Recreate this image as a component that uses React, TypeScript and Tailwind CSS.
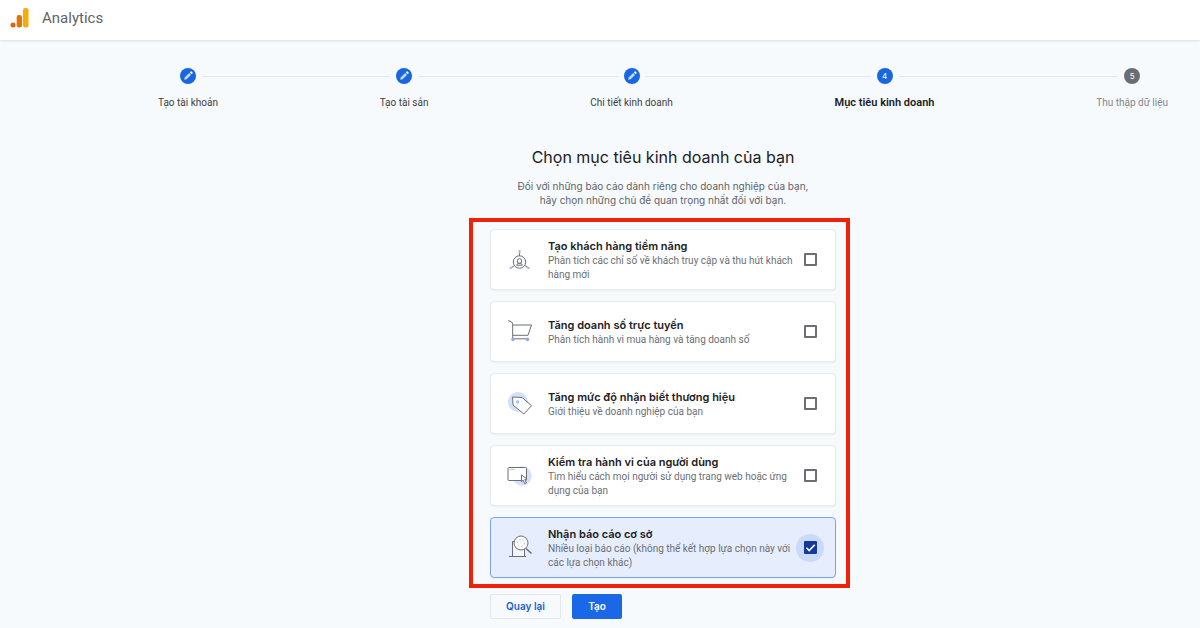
import type { ReactNode } from "react";
import { Fragment } from "react";

type Step = { label: string; state: "done" | "current" | "next" };

const steps: Step[] = [
  { label: "Tạo tài khoản", state: "done" },
  { label: "Tạo tài sản", state: "done" },
  { label: "Chi tiết kinh doanh", state: "done" },
  { label: "Mục tiêu kinh doanh", state: "current" },
  { label: "Thu thập dữ liệu", state: "next" },
];

const labelStyles = {
  done: "text-[10px] text-[#3c4043]",
  current: "text-[11px] font-semibold text-[#202124]",
  next: "text-[10px] text-[#80868b]",
};

type Goal = {
  id: string;
  title: string;
  text: string;
  icon: ReactNode;
  checked?: boolean;
};

const goals: Goal[] = [
  {
    id: "leads",
    title: "Tạo khách hàng tiềm năng",
    text: "Phân tích các chỉ số về khách truy cập và thu hút khách hàng mới",
    icon: (
      <>
        <path d="M19.5 12v4M14.5 25.5l-3 2M24.8 25.5l3 2" />
        <path d="M19.5 10v3.5M9.8 28.6l2.6-1.6M29.4 28.6l-2.6-1.6" stroke="#a9b3f0" strokeWidth="2" />
        <circle cx="19.5" cy="22" r="6.2" />
        <circle cx="19.5" cy="21" r="2.3" />
        <path d="M16.6 25.2c.4-1.5 1.5-1.8 2.9-1.8s2.5.3 2.9 1.8z" />
      </>
    ),
  },
  {
    id: "sales",
    title: "Tăng doanh số trực tuyến",
    text: "Phân tích hành vi mua hàng và tăng doanh số",
    icon: (
      <>
        <path d="M8 8.8c3 .2 4.5 1.2 4.7 4v14h14.5M12.7 13h18.8L28 23.3H12.7" />
        <circle cx="13" cy="27.4" r="1.8" fill="#8eabeb" stroke="none" />
        <circle cx="27.5" cy="27.4" r="1.8" fill="#8eabeb" stroke="none" />
      </>
    ),
  },
  {
    id: "brand",
    title: "Tăng mức độ nhận biết thương hiệu",
    text: "Giới thiệu về doanh nghiệp của bạn",
    icon: (
      <>
        <circle cx="18" cy="18" r="10" fill="#d2e0fc" stroke="none" />
        <path d="M12.6 13l.4 8 10.8 9 7.7-8.3-9.5-8.2z" fill="#fff" strokeLinejoin="round" />
        <circle cx="17.5" cy="18" r="1.8" fill="#a9c2f5" stroke="none" />
      </>
    ),
  },
  {
    id: "behavior",
    title: "Kiểm tra hành vi của người dùng",
    text: "Tìm hiểu cách mọi người sử dụng trang web hoặc ứng dụng của bạn",
    icon: (
      <>
        <circle cx="22" cy="20" r="9.7" fill="#d2e0fc" stroke="none" />
        <rect x="8" y="11.5" width="18.5" height="13" rx="1" fill="#fff" />
        <path d="M9.5 13.3h5" stroke="#b8bcc2" />
        <path d="M21.5 19l5.5 4-2.2.5 1.6 3.5-1.7.7-1.5-3.5-1.7 1.5z" fill="#fff" />
      </>
    ),
  },
  {
    id: "reports",
    title: "Nhận báo cáo cơ sở",
    text: "Nhiều loại báo cáo (không thể kết hợp lựa chọn này với các lựa chọn khác)",
    checked: true,
    icon: (
      <>
        <path d="M12.5 28.5v-15h12v15" fill="#f4f7fe" />
        <path d="M9 28.5h17" />
        <circle cx="21" cy="15" r="7" fill="#fff" />
        <circle cx="21" cy="15" r="3.5" stroke="#c3c7cd" strokeDasharray="2 1.5" />
        <path d="M26 20.5l5.5 5" strokeWidth="1.6" />
      </>
    ),
  },
];

function StepBadge({ state, number }: { state: Step["state"]; number: number }) {
  return (
    <span
      className={
        state === "next"
          ? "mx-1.5 grid size-4 place-items-center rounded-full bg-[#6b6d70] text-[8px] text-white"
          : "mx-1.5 grid size-4 place-items-center rounded-full bg-[#1967e0] text-[8px] text-white"
      }
    >
      {state === "done" ? (
        <svg viewBox="0 0 16 16" className="size-4" aria-hidden>
          <path d="M4.2 11.8l.5-2.4 4.4-4.4 1.9 1.9-4.4 4.4z" fill="#c5d9fb" />
          <path d="M9.7 4.4l.9-.9a.7.7 0 0 1 1 0l.9.9a.7.7 0 0 1 0 1l-.9.9z" fill="#fff" />
        </svg>
      ) : (
        number
      )}
    </span>
  );
}

function Stepper() {
  return (
    <ol className="flex px-8 pt-7">
      {steps.map((step, i) => (
        <Fragment key={step.label}>
          {i > 0 && <li aria-hidden className="mt-2 h-px flex-1 bg-[#e3e7eb]" />}
          <li className="flex flex-col" aria-current={step.state === "current" ? "step" : undefined}>
            <div className="flex items-center">
              <span className={i === 0 ? "h-px flex-1" : "h-px flex-1 bg-[#e3e7eb]"} />
              <StepBadge state={step.state} number={i + 1} />
              <span className={i === steps.length - 1 ? "h-px flex-1" : "h-px flex-1 bg-[#e3e7eb]"} />
            </div>
            <span className={`mt-[11px] whitespace-nowrap font-['Roboto',sans-serif] leading-4 ${labelStyles[step.state]}`}>
              {step.label}
            </span>
          </li>
        </Fragment>
      ))}
    </ol>
  );
}

function GoalCard({ id, title, text, icon, checked }: Goal) {
  return (
    <label
      htmlFor={id}
      className="flex min-h-[61px] cursor-pointer items-center rounded border border-[#e8eaed] bg-white pl-[9px] pr-[11px] shadow-xs has-checked:border-[#7ba4f0] has-checked:bg-[#e6edfd]"
    >
      <svg viewBox="0 0 40 40" className="size-10 shrink-0" fill="none" stroke="#6b6f75" strokeWidth="1" aria-hidden>
        {icon}
      </svg>
      <span className="ml-2 flex-1">
        <span className="block text-[11px] font-semibold leading-4 text-[#202124]">{title}</span>
        <span className="block font-['Roboto',sans-serif] text-[10px] leading-3.5 text-[#6b6f75]">{text}</span>
      </span>
      <span className="grid size-7 shrink-0 place-items-center rounded-full has-checked:bg-[#c9dafa]">
        <input
          id={id}
          type="checkbox"
          defaultChecked={checked}
          className="peer col-start-1 row-start-1 size-[13px] appearance-none rounded-[1px] border-2 border-[#6b6f75] checked:border-[#123a9c] checked:bg-[#123a9c]"
        />
        <svg
          viewBox="0 0 13 13"
          className="pointer-events-none invisible col-start-1 row-start-1 size-[13px] peer-checked:visible"
          aria-hidden
        >
          <path d="M2.5 6.8l2.7 2.7 5.5-5.7" fill="none" stroke="#fff" strokeWidth="1.6" />
        </svg>
      </span>
    </label>
  );
}

export default function App() {
  return (
    <div className="min-h-screen bg-[#f7fafc] font-['Inter',sans-serif]">
      <header className="flex h-10 items-center bg-white px-2.5 pb-1 shadow-[0_1px_2px_rgba(60,64,67,0.15)]">
        <svg viewBox="0 0 20 22" className="h-[22px] w-5" aria-hidden>
          <rect x="13" y="1" width="5.5" height="19.5" rx="2.2" fill="#f9ab00" />
          <rect x="6.7" y="8" width="5.3" height="12.5" rx="2.2" fill="#e37400" />
          <circle cx="3" cy="18" r="2.5" fill="#e06010" />
        </svg>
        <span className="ml-3 font-['Roboto',sans-serif] text-[15px] text-[#5f6368]">Analytics</span>
      </header>

      <main className="pb-2 pl-[126px]">
        <Stepper />

        <form className="mx-auto mt-[34px] w-[346px]" onSubmit={(e) => e.preventDefault()}>
          <h1 className="text-center text-base leading-6 text-[#202124]">Chọn mục tiêu kinh doanh của bạn</h1>
          <p className="mx-auto mt-2.5 max-w-[300px] text-center text-[10px] leading-3.5 text-[#5f6368]">
            Đối với những báo cáo dành riêng cho doanh nghiệp của bạn, hãy chọn những chủ đề quan trọng nhất đối với
            bạn.
          </p>

          <div className="-ml-[21px] -mr-[14px] mt-[11px] flex flex-col gap-[11px] border-4 border-[#f02009] pb-1.5 pl-[17px] pr-2.5 pt-[7px]">
            {goals.map((goal) => (
              <GoalCard key={goal.id} {...goal} />
            ))}
          </div>

          <div className="mt-1.5 flex gap-[11px] text-[10px] font-semibold">
            <button type="button" className="h-[25px] w-[71px] rounded-xs border border-[#e3e6ea] text-[#1a5fd0]">
              Quay lại
            </button>
            <button type="submit" className="h-[25px] w-[50px] rounded-xs bg-[#1a67e8] text-white">
              Tạo
            </button>
          </div>
        </form>
      </main>
    </div>
  );
}
